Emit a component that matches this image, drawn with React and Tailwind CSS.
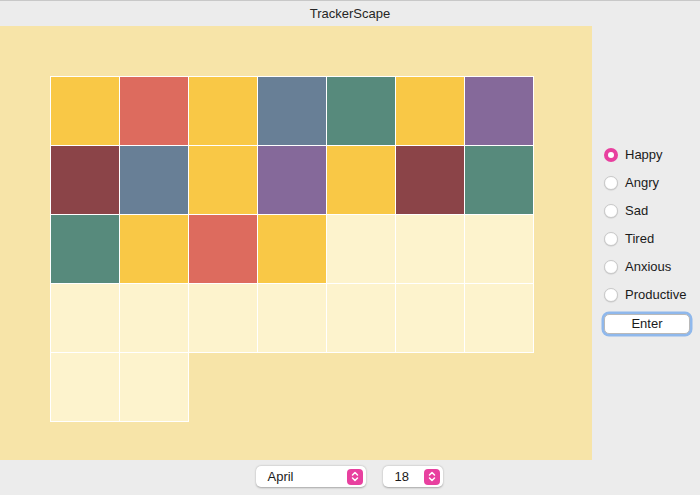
import { useState } from 'react'

const Y = 'bg-[#f9c846]'
const C = 'bg-[#dd6b5e]'
const S = 'bg-[#687f96]'
const T = 'bg-[#578a7c]'
const P = 'bg-[#85699a]'
const M = 'bg-[#8b4448]'
const E = 'bg-[#fdf3cd]'

const days = [
  Y, C, Y, S, T, Y, P,
  M, S, Y, P, Y, M, T,
  T, Y, C, Y, E, E, E,
  E, E, E, E, E, E, E,
  E, E,
]

const moods = ['Happy', 'Angry', 'Sad', 'Tired', 'Anxious', 'Productive']

function Chevrons() {
  return (
    <span className="w-[16px] h-[16px] rounded-[4px] bg-[#e8409f] flex items-center justify-center">
      <svg width="8" height="11" viewBox="0 0 8 11" fill="none" stroke="white" strokeWidth="1.5" strokeLinecap="round" strokeLinejoin="round">
        <path d="M1.5 4 L4 1.5 L6.5 4" />
        <path d="M1.5 7 L4 9.5 L6.5 7" />
      </svg>
    </span>
  )
}

export default function App() {
  const [mood, setMood] = useState('Happy')

  return (
    <div className="w-[700px] h-[495px] bg-[#ececec] flex flex-col border-t border-[#c8c8c8] overflow-hidden" style={{ fontFamily: '"Liberation Sans", Arial, sans-serif' }}>
      {/* Title */}
      <div className="h-[25px] flex items-center justify-center text-[13px] text-[#262626]">TrackerScape</div>

      <div className="flex h-[434px]">
        {/* Canvas */}
        <div className="w-[592px] h-full bg-[#f7e4a8] pt-[51px] pl-[51px]">
          <div className="grid grid-cols-[repeat(7,68px)] auto-rows-[68px] gap-px">
            {days.map((c, i) => (
              <div key={i} className={`${c} outline outline-1 outline-white`}></div>
            ))}
          </div>
        </div>

        {/* Moods */}
        <div className="flex-1 pl-[12px] pt-[115px]">
          <div className="flex flex-col">
            {moods.map(m => (
              <label key={m} className="h-[28px] flex items-center gap-[7px] text-[13px] text-[#1a1a1a] cursor-pointer" onClick={() => setMood(m)}>
                {mood === m ? (
                  <span className="w-[14px] h-[14px] rounded-full bg-[#e8409f] flex items-center justify-center">
                    <span className="w-[6px] h-[6px] rounded-full bg-white"></span>
                  </span>
                ) : (
                  <span className="w-[14px] h-[14px] rounded-full bg-white border border-[#c9c9c9] shadow-[0_0.5px_1px_rgba(0,0,0,0.15)]"></span>
                )}
                {m}
              </label>
            ))}
          </div>
          <button className="mt-[5px] w-[86px] h-[20px] bg-white rounded-[5px] border border-[#b9b9b9] ring-[2.5px] ring-[#8fb8ec] text-[13px] text-[#1a1a1a] flex items-center justify-center">
            Enter
          </button>
        </div>
      </div>

      {/* Bottom selects */}
      <div className="flex-1 flex items-start justify-center pt-[6px] pr-[2px] gap-[17px]">
        <div className="w-[110px] h-[21px] bg-white rounded-[5px] shadow-[0_0.5px_2px_rgba(0,0,0,0.3)] flex items-center justify-between pl-[12px] pr-[3px] text-[13px] text-[#1a1a1a]">
          <span>April</span>
          <Chevrons />
        </div>
        <div className="w-[60px] h-[21px] bg-white rounded-[5px] shadow-[0_0.5px_2px_rgba(0,0,0,0.3)] flex items-center justify-between pl-[12px] pr-[3px] text-[13px] text-[#1a1a1a]">
          <span>18</span>
          <Chevrons />
        </div>
      </div>
    </div>
  )
}
